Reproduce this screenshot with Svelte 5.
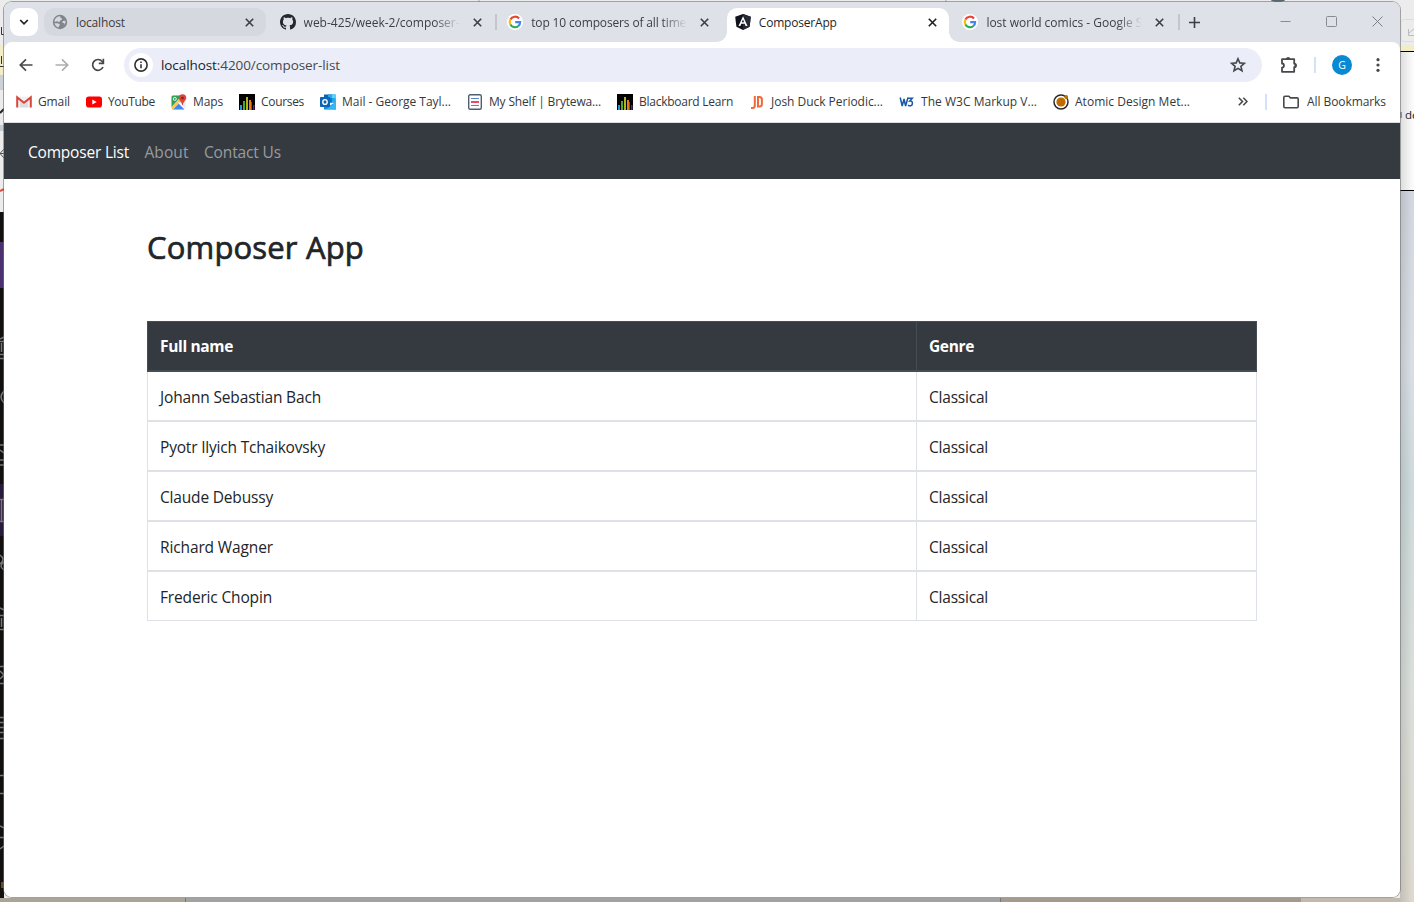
<script>
  const tabs = [
    { icon: 'globe', title: 'localhost', w: 49, hover: true },
    { icon: 'github', title: 'web-425/week-2/composer-', w: 156, fade: true, sep: true },
    { icon: 'google', title: 'top 10 composers of all time', w: 155, fade: true },
    { icon: 'angular', title: 'ComposerApp', w: 78, active: true },
    { icon: 'google', title: 'lost world comics - Google S', w: 156, fade: true, sep: true }
  ];

  const bookmarks = [
    { icon: 'gmail', label: 'Gmail', w: 32 },
    { icon: 'youtube', label: 'YouTube', w: 47 },
    { icon: 'maps', label: 'Maps', w: 30 },
    { icon: 'bars', label: 'Courses', w: 43 },
    { icon: 'outlook', label: 'Mail - George Tayl...', w: 109 },
    { icon: 'shelf', label: 'My Shelf | Brytewa...', w: 112 },
    { icon: 'bars', label: 'Blackboard Learn', w: 94 },
    { icon: 'jd', label: 'Josh Duck Periodic...', w: 112 },
    { icon: 'w3', label: 'The W3C Markup V...', w: 116 },
    { icon: 'atomic', label: 'Atomic Design Met...', w: 115 }
  ];

  const composers = [
    { fullName: 'Johann Sebastian Bach', genre: 'Classical', w: 161 },
    { fullName: 'Pyotr Ilyich Tchaikovsky', genre: 'Classical', w: 165 },
    { fullName: 'Claude Debussy', genre: 'Classical', w: 113 },
    { fullName: 'Richard Wagner', genre: 'Classical', w: 113 },
    { fullName: 'Frederic Chopin', genre: 'Classical', w: 112 }
  ];

  // Spreads the letters so that a label takes exactly the given width.
  function fit(node, width) {
    const natural = node.getBoundingClientRect().width;
    const n = node.textContent.length;
    node.style.letterSpacing = (width - natural) / n + 'px';
    node.style.width = width + 'px';
  }
</script>

{#snippet icon(name)}
  <svg class="ico" width="16" height="16" viewBox="0 0 16 16" aria-hidden="true">
    {#if name === 'globe'}
      <circle cx="8" cy="8" r="7.2" fill="#80868b" />
      <path d="M8.600 2.200c-1 .9-.3 1.800.8 2 1 .3.800 1.500-.2 1.700-1.500.2-.7 1.800-2.300 2-.9.100-1.500-.7-2.600-.5-.8.100-1.400.3-1.900.2a5.800 5.800 0 0 1 6.200-5.400z" fill="#d5d8df" />
      <path d="M2.400 9.300c1.800-.3 4.700.1 5.300.9.500.8-.5 1.300-.7 2-.1.600-.4 1-.8 1.300A5.900 5.900 0 0 1 2.400 9.300zM13.600 7c-1.300-.5-2.500-.5-3.100.4-.5.900.3 1.700 1.300 1.700.7.100.6 1.200 0 2.400A5.900 5.900 0 0 0 13.600 7z" fill="#d5d8df" />
    {:else if name === 'github'}
      <path fill="#24292f" d="M8 0C3.580 0 0 3.580 0 8c0 3.540 2.290 6.530 5.470 7.590.4.070.55-.17.55-.38 0-.19-.01-.82-.01-1.490-2.010.37-2.530-.49-2.690-.94-.09-.23-.48-.94-.82-1.130-.28-.15-.68-.52-.01-.53.63-.01 1.080.58 1.230.82.72 1.210 1.870.87 2.330.66.070-.52.28-.87.51-1.070-1.780-.2-3.640-.89-3.640-3.950 0-.87.31-1.590.82-2.150-.08-.2-.36-1.020.08-2.120 0 0 .67-.21 2.200.82.64-.18 1.320-.27 2-.27s1.360.09 2 .27c1.530-1.040 2.200-.82 2.200-.82.44 1.100.16 1.920.08 2.120.51.56.82 1.270.82 2.150 0 3.070-1.870 3.750-3.650 3.950.29.25.54.73.54 1.480 0 1.070-.01 1.930-.01 2.200 0 .21.15.46.55.38A8.010 8.010 0 0 0 16 8c0-4.420-3.580-8-8-8z" />
    {:else if name === 'google'}
      <circle cx="8" cy="8" r="8" fill="#fff" />
      <g fill="none" stroke-width="2.200">
        <path d="M12 4.500A5.200 5.200 0 0 0 3.400 5.600" stroke="#ea4335" />
        <path d="M3.400 5.600a5.200 5.200 0 0 0 0 4.800" stroke="#fbbc05" />
        <path d="M3.400 10.400a5.200 5.200 0 0 0 8 1.600" stroke="#34a853" />
        <path d="M11.400 12a5.100 5.100 0 0 0 1.700-3.800H8.200" stroke="#4285f4" />
      </g>
    {:else if name === 'angular'}
      <path d="M8 0l7.800 2.700-1.200 10L8 16l-6.600-3.300L.2 2.700z" fill="#10131c" />
      <path d="M8 0v16l6.600-3.300 1.200-10z" fill="#252a36" />
      <path d="M8 2.200L3.500 11.900h1.900l.9-2.200h3.400l.9 2.200h1.900zm0 3.200l1.200 2.900H6.800z" fill="#fff" />
    {:else if name === 'gmail'}
      <path d="M1.500 2.600h13v10.800h-13z" fill="#f1f1f1" />
      <path d="M4 13.400V7L8 10l4-3v6.400z" fill="#ddd" />
      <path d="M1.200 13.400V3.400L8 8.700l6.800-5.300v10" fill="none" stroke="#d9473b" stroke-width="2" />
    {:else if name === 'youtube'}
      <rect x="0" y="2.500" width="16" height="11" rx="2.800" fill="#f00" />
      <path d="M6.300 5.500v5L10.700 8z" fill="#fff" />
    {:else if name === 'maps'}
      <rect x=".5" y="1.500" width="14" height="14" rx="1.500" fill="#e8eaed" />
      <path d="M2 1.500h9L.5 13V3A1.500 1.500 0 0 1 2 1.500z" fill="#34a05a" />
      <path d="M2 15.500l5.500-6 6 6z" fill="#4285f4" />
      <path d="M.5 13l9-9 2 2-9.500 9.500H1z" fill="#f4c94c" />
      <path d="M7.500 8.200l7 7.300" stroke="#fff" stroke-width="1" />
      <circle cx="3.800" cy="4.900" r="1.500" fill="none" stroke="#fff" stroke-width=".9" />
      <path d="M11.500.2a3.800 3.800 0 0 1 3.800 3.800c0 2.400-3 3.500-3.500 7h-.6c-.5-3.500-3.500-4.600-3.500-7A3.800 3.800 0 0 1 11.500.2z" fill="#df453a" />
      <circle cx="11.500" cy="4" r="1.300" fill="#7d231d" />
    {:else if name === 'bars'}
      <path d="M0 0h16v16H0z" fill="#000" />
      <path d="M1 11h2v5H1z" fill="#1d9bd7" />
      <path d="M4 7h2v9H4z" fill="#4ba82e" />
      <path d="M7 3h2v13H7z" fill="#b1b51b" />
      <path d="M10 6h2v10h-2z" fill="#e77b16" />
      <path d="M12 8h1v8h-1z" fill="#d52b2b" />
      <path d="M14 11h1.500v5H14z" fill="#5a2382" />
    {:else if name === 'outlook'}
      <path d="M4 .5h11.500v8H4z" fill="#0a64b0" />
      <path d="M8 .5h4v4H8z" fill="#28a8ea" /><path d="M12 .5h3.500v4H12z" fill="#50d9ff" />
      <path d="M8 4.500h4v4H8z" fill="#0078d4" /><path d="M12 4.500h3.500v4H12z" fill="#28a8ea" />
      <path d="M4 15.500h12V8l-6 3.500L4 9z" fill="#1490df" />
      <path d="M6 15.500h10V8z" fill="#35b8f1" />
      <rect x="0" y="3" width="10" height="10" rx=".8" fill="#0f65b5" />
      <ellipse cx="5" cy="8" rx="2.200" ry="2.400" fill="none" stroke="#fff" stroke-width="1.400" />
    {:else if name === 'shelf'}
      <rect x="1.700" y=".7" width="12.600" height="14.600" rx="1.500" fill="#fff" stroke="#4d6072" stroke-width="1.400" />
      <path d="M4 4.500h8" stroke="#5887d1" stroke-width="1.100" />
      <path d="M4 8h8" stroke="#ef4863" stroke-width="1.800" />
      <path d="M4 11.500h8" stroke="#40a276" stroke-width="1.100" />
    {:else if name === 'jd'}
      <path d="M5.800 2v9.500q0 2.500-2.300 2.500H2M9 3v9.500h1.500q2.400 0 2.400-2.500V5.500Q12.900 3 10.500 3z" fill="none" stroke="#f2673b" stroke-width="2" />
    {:else if name === 'w3'}
      <path d="M1.200 3.500L3.200 12 5 5l1.600 7L9 3.500M9 4.200h4.300L10.800 7c1.900-.2 2.600 1 2.600 2.400 0 2.400-2.800 3.200-4.300 1.500" fill="none" stroke="#1859a5" stroke-width="1.500" />
    {:else if name === 'atomic'}
      <circle cx="8" cy="8" r="7" fill="#fff" stroke="#292929" stroke-width="1.500" />
      <circle cx="8" cy="8" r="4.600" fill="#bf6b00" />
      <circle cx="13.200" cy="3" r="1.900" fill="#bf6b00" />
    {/if}
  </svg>
{/snippet}

<div class="desktop">
  <svg class="backdrop" width="1414" height="902" aria-hidden="true">
    <defs>
      <linearGradient id="side" x1="0" y1="0" x2="0" y2="1">
        <stop offset="0" stop-color="#d3d7df" /><stop offset=".25" stop-color="#d9dfe5" />
        <stop offset=".42" stop-color="#cddadc" /><stop offset=".7" stop-color="#dadfda" /><stop offset="1" stop-color="#ded9ce" />
      </linearGradient>
      <linearGradient id="edge" x1="0" y1="0" x2="1" y2="0">
        <stop offset="0" stop-color="#000" stop-opacity=".12" /><stop offset="1" stop-color="#000" stop-opacity="0" />
      </linearGradient>
    </defs>
    <path d="M0 0h1414v902H0z" fill="#ececec" />
    <path d="M479 0v2M946 0v2" stroke="#aaa" />
    <ellipse cx="1278" cy="0" rx="7" ry="2" fill="#59666c" />
    <path d="M0 45h4v30H0z" fill="#f3edc6" />
    <path d="M0 75h4v15H0z" fill="#ccd1d6" />
    <path d="M1.500 27v7.500h3M1.500 56v8M0 66.500h4" stroke="#333" fill="none" />
    <path d="M0 113l4-4" stroke="#222" stroke-width="2" />
    <path d="M0 125h4v6H0z" fill="#c4cbd1" />
    <path d="M0 153.500h4M4 149l-4 4.500 4 4.500" stroke="#555" fill="none" />
    <path d="M0 191l4-2" stroke="#d84b40" stroke-width="2" />
    <path d="M0 212h4v686H0z" fill="#11100f" />
    <path d="M0 242h4v46H0z" fill="#4b316f" />
    <path d="M0 484h4v52H0z" fill="#281c3c" />
    <g stroke="#777" fill="none" stroke-width="1.500">
      <path d="M0 339l4-2M0 341.500h4M1.500 343v9M0 354.500h4M0 358.500h4M4 391q-6 6 0 12M0 445h4M0 450l4 3M0 460h4M0 465h4M0 499.500h4M1.500 500v21M0 521.500h4M0 555q6 4 0 9M4 562q-6 4 0 8M0 608l4 2M0 615.500h4M1.500 618v9M0 629.500h4M0 666.500h4M0 671l4 4-4 4M0 683.500h4M0 717.500h4M0 722.500h4M0 727.500h4M0 732.500h4M0 738.500h4M0 775.500h4M0 793.500h4M0 826l4 2M0 837.500h4M0 849l4-3" />
    </g>
    <path d="M1 882h3v6H1z" fill="#654b24" />
    <path d="M1400 45h14v6h-14z" fill="#f3edc6" />
    <path d="M1400 51h14v139h-14z" fill="#fafafa" />
    <path d="M1400 51.500h14M1400 190.500h14" stroke="#000" />
    <path d="M1414 19.500h-10q-3 0-3 3v16q0 3 3 3h10" fill="none" stroke="#ddd" />
    <path d="M1408.500 29v6.500h6M1409 33l5-4" fill="none" stroke="#bbb" />
    <path d="M1400 191h14v711h-14z" fill="url(#side)" />
    <path d="M1400 51h12v851h-12z" fill="url(#edge)" />
    <path d="M0 898h186v4H0z" fill="#a9a497" />
    <path d="M186 898h815v4H186z" fill="#a2a2a2" />
    <path d="M1001 898h300v4h-300z" fill="#a29b8e" />
    <path d="M1301 898h99v4h-99z" fill="#c2baae" />
    <path d="M185.500 898v4M1000.500 898v4" stroke="#777" />
    <path d="M1401 112v6" stroke="#444" />
    <text x="1405" y="119" font-size="11.500" font-family="Open Sans, sans-serif" fill="#222">de</text>
  </svg>

  <div class="window">
    <header class="tabstrip">
      <button class="search" aria-label="Search tabs">
        <svg width="10" height="6" viewBox="0 0 10 6"><path d="M1.200 1L5 4.800 8.800 1" fill="none" stroke="#1f1f1f" stroke-width="1.700" /></svg>
      </button>
      <div class="tabs">
        {#each tabs as tab}
          <div class="tab" class:active={tab.active} class:hover={tab.hover} class:sep={tab.sep}>
            {@render icon(tab.icon)}
            <span class="title" class:fade={tab.fade}><span class="fit" use:fit={tab.w}>{tab.title}</span></span>
            <svg class="close" width="9" height="9" viewBox="0 0 9 9"><path d="M.8.8l7.400 7.400M8.200.8L.8 8.200" fill="none" stroke="currentColor" stroke-width="1.600" /></svg>
          </div>
        {/each}
      </div>
      <svg class="plus" width="11" height="11" viewBox="0 0 11 11"><path d="M5.500 0v11M0 5.500h11" stroke="#3c3e42" stroke-width="1.600" /></svg>
      <div class="controls">
        <svg width="11" height="11" viewBox="0 0 11 11"><path d="M.5 5.500h10" stroke="#888b90" /></svg>
        <svg width="11" height="11" viewBox="0 0 11 11"><rect x=".5" y=".5" width="10" height="10" rx="1" fill="none" stroke="#888b90" /></svg>
        <svg width="11" height="11" viewBox="0 0 11 11"><path d="M.5.5l10 10M10.500.5l-10 10" stroke="#7c7f84" /></svg>
      </div>
    </header>

    <div class="toolbar">
      <svg class="back" width="14" height="14" viewBox="0 0 14 14"><path d="M13.500 7H1.500M7 1.300L1.300 7 7 12.700" fill="none" stroke="#46484b" stroke-width="1.700" /></svg>
      <svg class="forward" width="14" height="14" viewBox="0 0 14 14"><path d="M.5 7h12M7 1.300L12.700 7 7 12.700" fill="none" stroke="#acaeb2" stroke-width="1.700" /></svg>
      <svg class="reload" width="14" height="14" viewBox="0 0 14 14"><path d="M12 9A5.400 5.400 0 1 1 11.200 3.500L12.500 5" fill="none" stroke="#46484b" stroke-width="1.700" /><path d="M13.200.8v5.400H7.800V4.500h3.700V.8z" fill="#46484b" /></svg>
      <div class="omnibox">
        <span class="info">
          <svg width="14" height="14" viewBox="0 0 14 14"><circle cx="7" cy="7" r="6.100" fill="none" stroke="#303134" stroke-width="1.600" /><path d="M7 6.200v4.100M7 3.500v1.600" stroke="#303134" stroke-width="1.600" /></svg>
        </span>
        <span class="url"><span class="fit" use:fit={179}><b>localhost</b>:4200/composer-list</span></span>
        <svg class="star" width="16" height="16" viewBox="0 0 16 16"><path d="M8 1.700l1.800 4.200 4.600.4-3.500 3 1.100 4.500L8 11.400l-4 2.400 1.100-4.500-3.500-3 4.600-.4z" fill="none" stroke="#46484b" stroke-width="1.600" /></svg>
      </div>
      <svg class="ext" width="18" height="18" viewBox="0 0 18 18"><path d="M2 3.200h12.200v4.500a1.700 1.700 0 0 1 0 3.400v4.700H2v-4.200c2.600 0 2.600-4.100 0-4.100z" fill="none" stroke="#46484b" stroke-width="1.800" stroke-linejoin="round" /><path d="M6 3a2.100 2.100 0 0 1 4.200 0zM14.500 7.200a2.200 2.200 0 0 1 0 4.400z" fill="#46484b" /></svg>
      <i class="rule"></i>
      <span class="avatar">G</span>
      <svg class="dots" width="4" height="14" viewBox="0 0 4 14" fill="#46484b"><circle cx="2" cy="1.700" r="1.600" /><circle cx="2" cy="7" r="1.600" /><circle cx="2" cy="12.300" r="1.600" /></svg>
    </div>

    <div class="bookmarks">
      {#each bookmarks as b}
        <span class="bookmark">{@render icon(b.icon)}<span class="fit" use:fit={b.w}>{b.label}</span></span>
      {/each}
      <svg class="more" width="10" height="9" viewBox="0 0 10 9"><path d="M.8.700L4.500 4.500.8 8.300M5.300.7L9 4.500 5.300 8.300" fill="none" stroke="#46484b" stroke-width="1.600" /></svg>
      <i class="rule"></i>
      <svg class="folder" width="16" height="14" viewBox="0 0 16 14"><path d="M.8 11.500v-9Q.8 1.200 2 1.200h3.800l1.700 1.700H14q1.200 0 1.200 1.200v7.400q0 1.200-1.200 1.200H2Q.8 12.700.8 11.500z" fill="none" stroke="#46484b" stroke-width="1.600" /></svg>
      <span class="fit" use:fit={79}>All Bookmarks</span>
    </div>

    <nav>
      <a class="current" href="#list"><span class="fit" use:fit={101}>Composer List</span></a>
      <a href="#about"><span class="fit" use:fit={44}>About</span></a>
      <a href="#contact"><span class="fit" use:fit={77}>Contact Us</span></a>
    </nav>

    <main>
      <h2><span class="fit" use:fit={217}>Composer App</span></h2>
      <table>
        <thead>
          <tr>
            <th class="name"><span class="fit" use:fit={73}>Full name</span></th>
            <th><span class="fit" use:fit={45}>Genre</span></th>
          </tr>
        </thead>
        <tbody>
          {#each composers as c}
            <tr>
              <td><span class="fit" use:fit={c.w}>{c.fullName}</span></td>
              <td><span class="fit" use:fit={59}>{c.genre}</span></td>
            </tr>
          {/each}
        </tbody>
      </table>
    </main>
  </div>
</div>

<style>
  :global(body) { margin: 0; overflow: hidden; }
  .desktop {
    position: relative;
    box-sizing: border-box;
    width: 1414px;
    height: 902px;
    padding: 2px 0 0 4px;
    overflow: hidden;
    font-family: "Open Sans", "Noto Sans", sans-serif;
  }
  .backdrop { position: absolute; left: 0; top: 0; }
  svg { display: block; flex: none; }
  .fit { display: inline-block; white-space: nowrap; }
  .window {
    position: relative;
    width: 1396px;
    height: 895px;
    background: linear-gradient(#dee1e8 50px, #fff 50px);
    border-radius: 8px;
    box-shadow: 0 0 0 1px rgba(110, 112, 114, 0.6);
    overflow: hidden;
  }

  .tabstrip {
    display: flex;
    align-items: center;
    height: 40px;
    background: #dee1e8;
    color: #3c3e41;
    font-size: 12px;
  }
  .search {
    display: flex;
    align-items: center;
    justify-content: center;
    width: 28px;
    height: 28px;
    margin: 0 6px;
    padding: 0;
    border: 0;
    border-radius: 9px;
    background: #fff;
  }
  .tabs { display: flex; gap: 5.600px; height: 100%; align-items: center; }
  .tab {
    position: relative;
    display: flex;
    align-items: center;
    box-sizing: border-box;
    width: 222px;
    height: 28px;
    padding-left: 8px;
    border-radius: 10px;
  }
  .hover { background: #d5d8df; }
  .active {
    align-self: flex-end;
    height: 34px;
    padding-bottom: 6px;
    border-radius: 10px 10px 0 0;
    background: #fff;
    color: #1f1f1f;
  }
  .active::before, .active::after {
    content: "";
    position: absolute;
    bottom: 0;
    width: 10px;
    height: 10px;
  }
  .active::before { left: -10px; background: radial-gradient(circle at 0 0, transparent 9.500px, #fff 10px); }
  .active::after { right: -10px; background: radial-gradient(circle at 100% 0, transparent 9.500px, #fff 10px); }
  .sep::after {
    content: "";
    position: absolute;
    right: -3.500px;
    top: 6px;
    width: 2px;
    height: 16px;
    background: #c4c6c9;
  }
  .title { width: 156px; margin: 1px 14px 0 8px; overflow: hidden; white-space: nowrap; }
  .fade { -webkit-mask-image: linear-gradient(90deg, #000 84%, transparent); mask-image: linear-gradient(90deg, #000 84%, transparent); }
  .close { margin-left: -1px; }
  .plus { margin-left: 13px; }
  .controls { display: flex; gap: 35px; margin: 0 17.500px 2px auto; }

  .toolbar {
    display: flex;
    align-items: center;
    height: 46px;
    background: #fff;
    border-radius: 8px 8px 0 0;
  }
  .back { margin-left: 15px; }
  .forward { margin-left: 22px; }
  .reload { margin-left: 22px; }
  .omnibox {
    display: flex;
    align-items: center;
    box-sizing: border-box;
    width: 1138px;
    height: 34px;
    margin-left: 19px;
    padding: 0 16px 0 5px;
    border-radius: 17px;
    background: #ebeef8;
    color: #46484b;
    font-size: 13.500px;
  }
  .info {
    display: flex;
    align-items: center;
    justify-content: center;
    width: 24px;
    height: 24px;
    border-radius: 50%;
    background: #fff;
  }
  .url { margin-left: 8px; }
  .url b { font-weight: 400; color: #202124; }
  .star { margin-left: auto; }
  .ext { margin-left: 18px; }
  .rule { width: 2px; height: 16px; background: #d2e2fb; }
  .toolbar .rule { margin-left: 16px; }
  .avatar {
    width: 20px;
    height: 20px;
    margin-left: 16px;
    border-radius: 50%;
    background: #0789d4;
    color: #fff;
    font-size: 10.500px;
    line-height: 20px;
    text-align: center;
  }
  .dots { margin-left: 24px; }

  .bookmarks {
    display: flex;
    align-items: center;
    box-sizing: border-box;
    height: 35px;
    padding: 0 14px 7px 12px;
    border-bottom: 1px solid #dcdddf;
    color: #36383b;
    font-size: 12px;
  }
  .bookmark { display: flex; align-items: center; gap: 6px; margin-right: 16px; }
  .more { margin-left: auto; margin-right: 17px; }
  .folder { margin: 0 8px 0 16px; }

  nav {
    display: flex;
    align-items: center;
    gap: 15.500px;
    box-sizing: border-box;
    height: 56px;
    padding: 1px 0 0 24px;
    background: #343a40;
    font-size: 15.500px;
  }
  nav a { color: #999c9f; text-decoration: none; }
  nav .current { color: #fff; }

  main { width: 1110px; margin: 0 auto; padding-top: 48px; color: #212529; }
  h2 {
    margin: 0;
    font-size: 31px;
    line-height: 40px;
    font-weight: 400;
    -webkit-text-stroke: 0.700px #212529;
  }
  table {
    width: 100%;
    margin-top: 54px;
    border-collapse: separate;
    border-spacing: 0;
    table-layout: fixed;
    border-left: 1px solid #dee2e6;
    font-size: 15.500px;
  }
  th, td {
    box-sizing: border-box;
    height: 50px;
    padding: 1px 12px 0;
    border-right: 1px solid #dee2e6;
    border-bottom: 2px solid #dee2e6;
    text-align: left;
    vertical-align: middle;
  }
  th {
    height: 51px;
    padding-top: 0;
    background: #343a40;
    color: #fff;
    border-color: #454d55;
    border-top: 1px solid #454d55;
    font-weight: 700;
  }
  th:first-child { box-shadow: -1px 0 0 #454d55; }
  .name { width: 769px; }
  tbody tr:last-child td { height: 49px; border-bottom-width: 1px; }
</style>
